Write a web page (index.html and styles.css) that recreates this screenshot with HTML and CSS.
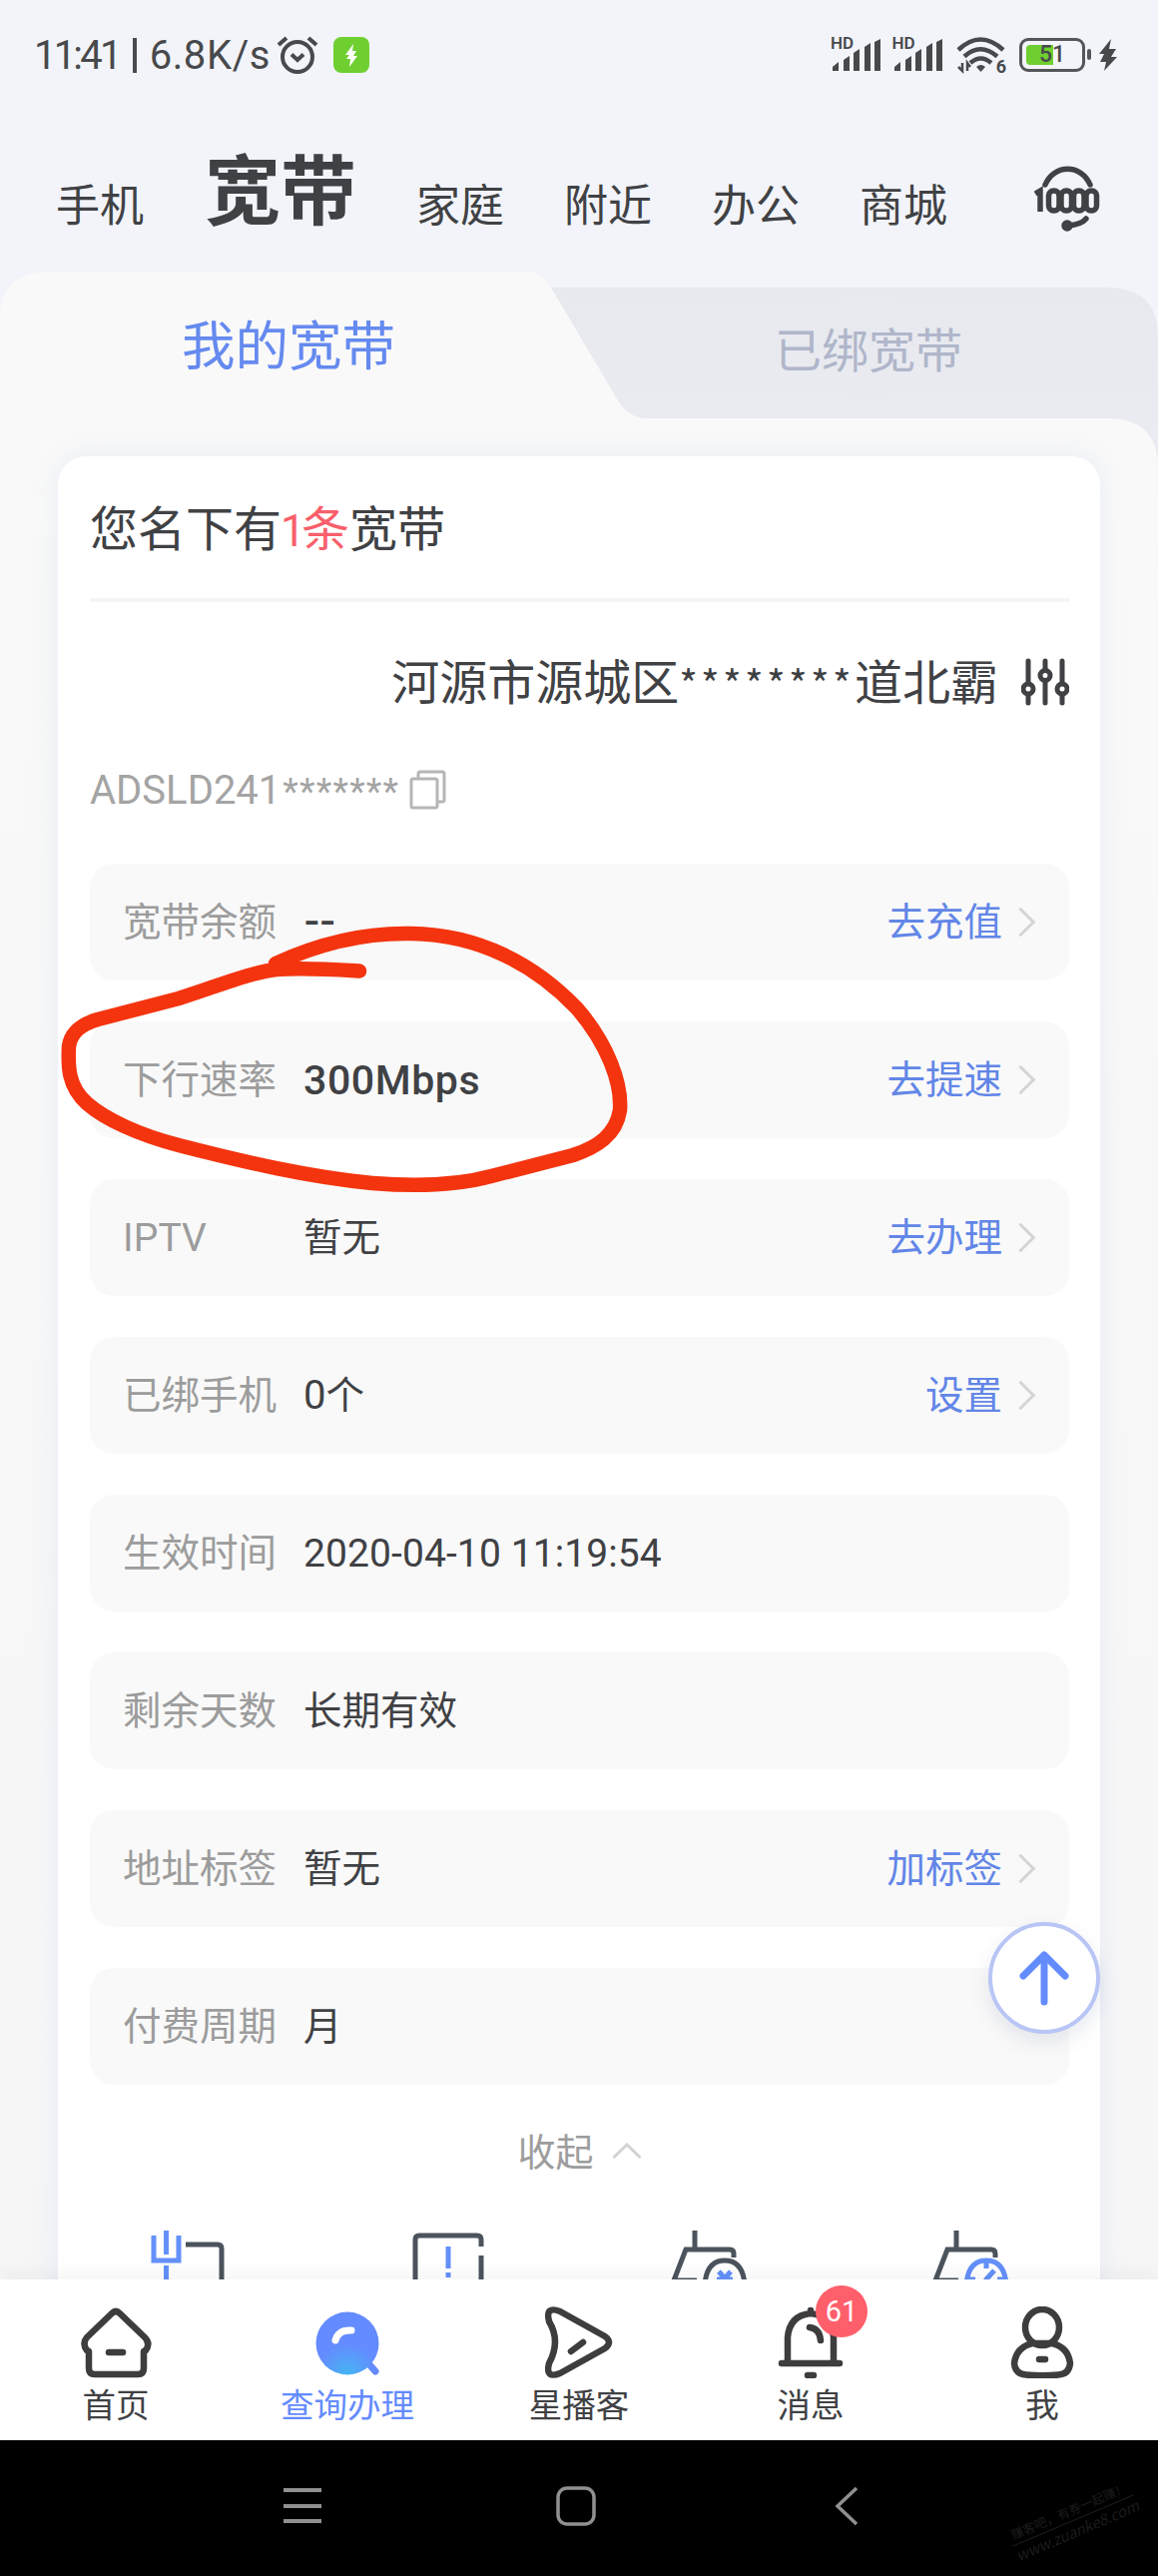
FILE: index.html
```html
<!DOCTYPE html>
<html lang="zh-CN">
<head>
<meta charset="utf-8">
<title>我的宽带</title>
<link rel="stylesheet" href="styles.css">
</head>
<body>
<div class="screen">
  <header class="status">
    <span class="clock"><span>11:41</span><i class="bar"></i><span>6.8K/s</span></span>
    <svg class="alarm" width="42" height="40" viewBox="0 0 42 40" fill="none" stroke="#48494c" stroke-width="4"><circle cx="21" cy="22" r="15"/><path d="M2 10 10 3M40 10 32 3"/><path d="M15 19.500l6 5.500 6-5.500"/></svg>
    <svg class="charge" width="36" height="36" viewBox="0 0 36 36"><rect width="36" height="36" rx="8" fill="#6fcf30"/><path d="M20 7 12 18h4l-3 4h4l-1 8 8-11h-4l3-5h-4z" fill="#fff"/></svg>
    <span class="spacer"></span>
    <span class="signal"><b>HD</b><svg width="52" height="34" viewBox="0 0 52 34" fill="#48494c"><path d="M2 33v-4l6-5v9zM13 33V22l6-4v15zM23 33V15l6-4v22zM34 33V9l6-4v28zM44 33V4l6-3v32z"/></svg></span>
    <span class="signal"><b>HD</b><svg width="52" height="34" viewBox="0 0 52 34" fill="#48494c"><path d="M2 33v-4l6-5v9zM13 33V22l6-4v15zM23 33V15l6-4v22zM34 33V9l6-4v28zM44 33V4l6-3v32z"/></svg></span>
    <span class="wifi"><svg width="50" height="38" viewBox="0 0 50 38" fill="none" stroke="#48494c" stroke-width="4.500"><path d="M2 14Q24-7 47 14M8 20.500Q24 6 41 20.500M14 27Q24.500 18 35 27"/><path d="M20 31q4.500-4 9 0l-4.500 5z" fill="#48494c" stroke="none"/><path d="M6 27v8l-4-4M11 35v-8l3 4" stroke-width="2.500"/></svg><b>6</b></span>
    <span class="battery"><i class="charge-level"></i><b>51</b></span>
    <svg class="bolt" width="20" height="34" viewBox="0 0 20 34" fill="#48494c"><path d="M13 1 1 16h5l-4 8h6L6 33 19 19h-6l5-8h-7z"/></svg>
  </header>

  <nav class="topnav">
    <a>手机</a><a class="current">宽带</a><a>家庭</a><a>附近</a><a>办公</a><a>商城</a>
    <span class="service"><svg width="68" height="68" viewBox="0 0 68 68" fill="none" stroke="#404144" stroke-width="5.500" stroke-linecap="round"><path d="M11 20C20-1 47-1 56 20M52 54Q47 60 34 61"/><circle cx="33" cy="61" r="3" fill="#404144"/><g stroke-width="5.500"><path d="M1 29l5-3v21" stroke-linecap="butt"/><rect x="14.500" y="26" width="10.500" height="20" rx="5"/><rect x="27" y="26" width="10.500" height="20" rx="5"/><rect x="39.500" y="26" width="10.500" height="20" rx="5"/><rect x="52" y="26" width="10.500" height="20" rx="5"/></g></svg></span>
  </nav>

  <main class="page">
    <svg class="tabshape" width="1160" height="210" viewBox="0 0 1160 210">
      <defs><linearGradient id="tabFill" x1="0" y1="0" x2="0" y2="1"><stop offset="0" stop-color="#e7e9ef"/><stop offset="1" stop-color="#ebecf1"/></linearGradient></defs>
      <path d="M500 16H1110Q1160 16 1160 66V210H500z" fill="url(#tabFill)"/>
      <path d="M0 210V48Q0 0 50 0H526Q543 0 552 16L616 124Q628 147 648 147H1110Q1160 147 1160 197V210z" fill="#f9f9f9"/>
    </svg>
    <div class="tabs"><a class="mine">我的宽带</a><a class="bound">已绑宽带</a></div>

    <section class="card">
      <h1>您名下有<em><b>1</b>条</em>宽带</h1>
      <div class="address"><span>河源市源城区<span class="stars">********</span>道北霸</span>
        <svg width="48" height="48" viewBox="0 0 48 48" fill="none" stroke="#404144" stroke-width="5" stroke-linecap="round"><path d="M7 3v22M7 37v8M24 3v9M24 23v22M41 3v22M41 37v8"/><circle cx="7" cy="31" r="5"/><circle cx="24" cy="17.500" r="5"/><circle cx="41" cy="31" r="5"/></svg>
      </div>
      <div class="account"><span>ADSLD241<span class="stars">*******</span></span>
        <svg width="38" height="40" viewBox="0 0 38 40" fill="none" stroke="#b6b6b6" stroke-width="3"><rect x="2" y="9" width="26" height="29" rx="2"/><path d="M9 8V4q0-2 2-2h22q2 0 2 2v26q0 2-2 2h-4"/></svg>
      </div>
      <ul class="rows">
        <li><label>宽带余额</label><strong class="dash">--</strong><a>去充值</a><i class="chev"></i></li>
        <li><label>下行速率</label><strong class="speed">300Mbps</strong><a>去提速</a><i class="chev"></i></li>
        <li><label class="latin">IPTV</label><span>暂无</span><a>去办理</a><i class="chev"></i></li>
        <li><label>已绑手机</label><span><b class="num">0</b>个</span><a>设置</a><i class="chev"></i></li>
        <li><label>生效时间</label><span class="latin">2020-04-10 11:19:54</span></li>
        <li><label>剩余天数</label><span>长期有效</span></li>
        <li><label>地址标签</label><span>暂无</span><a>加标签</a><i class="chev"></i></li>
        <li><label>付费周期</label><span>月</span></li>
      </ul>
      <div class="fold">收起<svg width="30" height="18" viewBox="0 0 30 18" fill="none" stroke="#d2d2d2" stroke-width="3"><path d="M1.500 16 15 3l13.500 13"/></svg></div>
      <div class="tools">
        <svg width="76" height="56" viewBox="0 0 76 56" fill="none" stroke="#4b535c" stroke-width="5"><path d="M37 16H69q4 0 4 4V56"/><path d="M5 7V32H30V7M17.500 2v24M17.500 37v19" stroke="#6490fa"/></svg>
        <svg width="76" height="56" viewBox="0 0 76 56" fill="none" stroke="#4b535c" stroke-width="5"><path d="M5 56V11q0-4 4-4H67q4 0 4 4v7M71 27v29"/><path d="M38 18v22M38 44v5" stroke="#6490fa"/></svg>
        <svg width="76" height="56" viewBox="0 0 76 56" fill="none" stroke="#4b535c" stroke-width="5"><path d="M24 2v19M63 29V25q0-4-4-4H15L3 52H26"/><path d="M34 56q2-24 20-24t20 24"/><path d="M48 43l6 7 6-7M46 51H62" stroke="#6490fa"/></svg>
        <svg width="76" height="56" viewBox="0 0 76 56" fill="none" stroke="#4b535c" stroke-width="5"><path d="M24 2v19M63 29V25q0-4-4-4H15L3 52H26"/><path d="M34 56q2-24 20-24t20 24M54 33v7M62 42l-9 10M36 51h7M65 51h7" stroke="#6490fa"/></svg>
      </div>
    </section>
  </main>

  <nav class="tabbar">
    <a><svg width="72" height="72" viewBox="0 0 72 72" fill="none" stroke="#3d3d3d" stroke-width="6.500" stroke-linejoin="round" stroke-linecap="round"><path d="M32 7q4-4 8 0L65 31q6 6 1 13l-2 1v17q0 6-6 6H15q-6 0-6-6V45l-2-1Q2 37 7 31z"/><path d="M29 46H43"/></svg>首页</a>
    <a class="active"><svg width="72" height="72" viewBox="0 0 72 72"><defs><radialGradient id="lens" cx=".5" cy="1" r=".5"><stop offset="0" stop-color="#45b5f2"/><stop offset="1" stop-color="#648bff"/></radialGradient></defs><path d="m57 57 7 8" stroke="#648bff" stroke-width="7" stroke-linecap="round"/><circle cx="36" cy="37" r="31.500" fill="url(#lens)"/><path d="M24 34q3-11 16-10" fill="none" stroke="#fff" stroke-width="7" stroke-linecap="round"/></svg>查询办理</a>
    <a><svg width="72" height="72" viewBox="0 0 72 72" fill="none" stroke="#3d3d3d" stroke-width="6.500" stroke-linejoin="round" stroke-linecap="round"><path d="M17 5Q2-1 6 15 18 35 6 57 2 73 17 67L62 42q8-6 0-12z"/><path d="m28 45 12-9"/></svg>星播客</a>
    <a><svg width="72" height="72" viewBox="0 0 72 72" fill="none" stroke="#3d3d3d" stroke-width="6.500" stroke-linecap="round"><path d="M7 57H65M13 55V31Q15 9 36 7 57 9 59 31V55M36 6V4M33 69h6M35 21q10 1 11 13"/></svg>消息<span class="badge">61</span></a>
    <a><svg width="72" height="72" viewBox="0 0 72 72" fill="none" stroke="#3d3d3d" stroke-width="6.500" stroke-linecap="round"><ellipse cx="36" cy="21" rx="17" ry="18"/><path d="M26 37H46Q62 41 64 57 63 68 52 68.500 36 70 20 68.500 9 68 8 57 10 41 26 37zM33 53h6"/></svg>我</a>
  </nav>

  <footer class="sysnav">
    <svg width="40" height="40" viewBox="0 0 40 40" stroke="#909090" stroke-width="4"><path d="M1 4H39M1 20H39M1 35H39"/></svg>
    <svg width="40" height="40" viewBox="0 0 40 40" fill="none" stroke="#909090" stroke-width="3.500"><rect x="2" y="2" width="36" height="36" rx="9"/></svg>
    <svg width="40" height="40" viewBox="0 0 40 40" fill="none" stroke="#909090" stroke-width="3.500"><path d="M28 2 9 20 28 38"/></svg>
  </footer>

  <button class="totop"><svg width="56" height="56" viewBox="0 0 56 56" fill="none" stroke="#658cff" stroke-width="7" stroke-linecap="round" stroke-linejoin="round"><path d="M28 52V5M7 26 28 5 49 26"/></svg></button>
  <svg class="marker" width="580" height="280" viewBox="60 920 580 280" fill="none" stroke="#f4340f" stroke-width="14.500" stroke-linecap="round" stroke-linejoin="round"><path d="M276 965C326 942 370 934 412 935 480 936 536 966 578 1010 609 1046 623 1085 621 1112 617 1137 598 1149 574 1157L492 1178C455 1188 410 1188 373 1185 310 1179 245 1164 179 1147 140 1137 105 1121 87 1105 68 1088 68 1068 69 1048 71 1034 81 1026 98 1021 L179 1000C220 987 250 974 277 971 305 969 335 971 360 972.500"/></svg>
  <div class="watermark"><span>赚客吧，有券一起赚！</span><span>www.zuanke8.com</span></div>
</div>
</body>
</html>
```
FILE: styles.css
```css
* { box-sizing: border-box; margin: 0; padding: 0; }
body { width: 1160px; height: 2580px; overflow: hidden; background: #f2f4f9; font-family: "Noto Sans CJK SC", sans-serif; color: #404144; }
svg { display: block; flex: none; }
i, em { font-style: normal; }
.screen { position: relative; width: 1160px; height: 2580px; display: flex; flex-direction: column; overflow: hidden; }

.status { height: 110px; display: flex; align-items: center; padding: 0 40px 0 34px; font-family: Roboto, sans-serif; color: #48494c; }
.clock { font-size: 40px; width: 243px; white-space: nowrap; display: flex; align-items: center; justify-content: space-between; padding-right: 6px; }
.clock span:first-child { letter-spacing: -2.800px; }
.clock span:last-child { letter-spacing: .6px; }
.clock .bar { width: 4px; height: 35px; background: #48494c; }
.charge { margin-left: 15px; }
.spacer { flex: 1; }
.signal { position: relative; width: 52px; margin-right: 9.500px; }
.signal + .signal { margin-right: 12.500px; }
.signal b { position: absolute; left: 0; top: -3px; font-size: 17px; line-height: 17px; font-weight: 600; }
.wifi { position: relative; width: 50px; margin-right: 13px; }
.wifi b { position: absolute; right: 0; bottom: -1px; font-size: 18px; line-height: 17px; }
.battery { position: relative; width: 66px; height: 34px; border: 3.500px solid #55565a; border-radius: 9px; margin-right: 13px; padding: 4px; }
.battery::after { content: ""; position: absolute; right: -9px; top: 8px; width: 4px; height: 11px; background: #55565a; border-radius: 2px; }
.charge-level { display: block; width: 27px; height: 20px; border-radius: 4px 0 0 4px; background: #6fcf30; }
.battery b { position: absolute; left: 17px; top: 2px; font-size: 23px; line-height: 23px; font-weight: 500; }

.topnav { height: 162px; display: flex; align-items: baseline; padding: 34px 55px 0 56px; font-size: 44px; line-height: 90px; }
.topnav a { margin-right: 60px; white-space: nowrap; }
.topnav .current { font-size: 76px; font-weight: 700; margin: 0 60px 0 1px; transform: translateY(-3px); }
.topnav .service { align-self: flex-start; margin: 21px 0 0 27px; }

.page { position: relative; height: 2011px; overflow: hidden; background: #f2f4f9; }
.page::before { content: ""; position: absolute; inset: 209px 0 0; background: linear-gradient(#f9f9f9, #f6f6f7); }
.tabshape { position: absolute; left: 0; top: 0; }
.tabs { position: relative; height: 185px; display: flex; align-items: flex-start; line-height: 60px; }
.tabs .mine { width: 580px; padding: 41px 0 0 182px; font-size: 53.500px; color: #658aef; }
.tabs .bound { padding: 46px 0 0 196px; font-size: 47px; color: #b0b6ca; }

.card { position: relative; width: 1044px; height: 1900px; margin: 0 58px; padding: 0 31px 0 32px; border-radius: 28px; background: #fff; box-shadow: 0 0 26px rgba(190, 207, 235, .3); }
.card h1 { height: 146px; padding-top: 34px; border-bottom: 4px solid #f5f5f6; font-size: 48px; line-height: 70px; font-weight: 400; }
.card h1 em { color: #f85f6b; }
.card h1 b { display: inline-block; width: 21px; margin-left: -1px; font: 44px/70px Roboto, sans-serif; }
.address { display: flex; justify-content: flex-end; align-items: center; height: 160px; font-size: 48px; gap: 23px; }
.address > span { margin-bottom: 6px; }
.address .stars { font-size: 40px; letter-spacing: 3.300px; }
.account { display: flex; align-items: center; height: 52px; font-family: Roboto, sans-serif; font-size: 40px; color: #a4a4a4; gap: 10px; padding-top: 4px; }
.account .stars { font-size: 36px; letter-spacing: 1.200px; margin-left: 2px; }
.rows { list-style: none; display: grid; gap: 41px; margin-top: 50px; }
.rows li { height: 117px; display: flex; align-items: center; padding: 0 34px 0 33px; border-radius: 24px; background: #f9f9f9; font-size: 38.500px; }
.rows li > * { margin-bottom: 7px; }
.rows label { width: 181px; color: #9c9c9c; }
.rows a { margin-left: auto; color: #6286e7; }
.rows .latin, .rows .num, .rows .speed { font-family: Roboto, sans-serif; font-weight: 400; }
.rows .latin, .rows .speed { margin-bottom: 0; }
.rows .latin { font-size: 39px; letter-spacing: .1px; }
.rows .speed { font-size: 41px; font-weight: 500; letter-spacing: .6px; }
.rows .num { font-size: 40px; }
.rows .dash { font-family: Inter, sans-serif; font-size: 36px; font-weight: 600; letter-spacing: -1px; margin-bottom: 3px; }
.rows .chev { width: 21px; height: 21px; margin: 0 4px 0 8px; border: solid #d4d4d4; border-width: 3px 3px 0 0; transform: rotate(45deg); }
.fold { display: flex; justify-content: center; align-items: center; gap: 18px; height: 136px; padding-bottom: 7px; font-size: 38px; color: #9d9d9d; }
.fold svg { margin-top: 3px; }
.tools { display: flex; gap: 185.500px; margin: 8px 0 0 59px; }

.tabbar { position: relative; height: 161px; display: flex; background: #fff; box-shadow: 0 -8px 16px rgba(0, 0, 0, .035); }
.tabbar a { position: relative; flex: 1; display: flex; flex-direction: column; align-items: center; padding-top: 27px; font-size: 33.500px; line-height: 49px; }
.tabbar .active { color: #648bff; }
.badge { position: absolute; left: 121px; top: 6px; width: 52px; height: 52px; border-radius: 50%; background: #ff5f6b; color: #fff; font: 29px/53px Roboto, sans-serif; text-align: center; }

.sysnav { height: 136px; background: #000; display: flex; align-items: center; padding: 0 0 5px 283px; gap: 234px; }
.sysnav svg:last-child { margin-left: -1px; }
.totop { position: absolute; left: 990px; top: 1925px; width: 112px; height: 112px; border: 4px solid #b8c5f5; border-radius: 50%; background: #fff; box-shadow: 0 8px 20px rgba(80, 95, 140, .13); display: flex; align-items: center; justify-content: center; }
.marker { position: absolute; left: 60px; top: 920px; }
.watermark { position: absolute; left: 1010px; top: 2504px; width: 130px; transform: rotate(-23deg); color: #1c1c1c; font-size: 12.500px; line-height: 20px; display: flex; flex-direction: column; align-items: center; white-space: nowrap; }
.watermark span + span { border-top: 1px solid #1c1c1c; font-size: 15px; font-style: italic; }
```
